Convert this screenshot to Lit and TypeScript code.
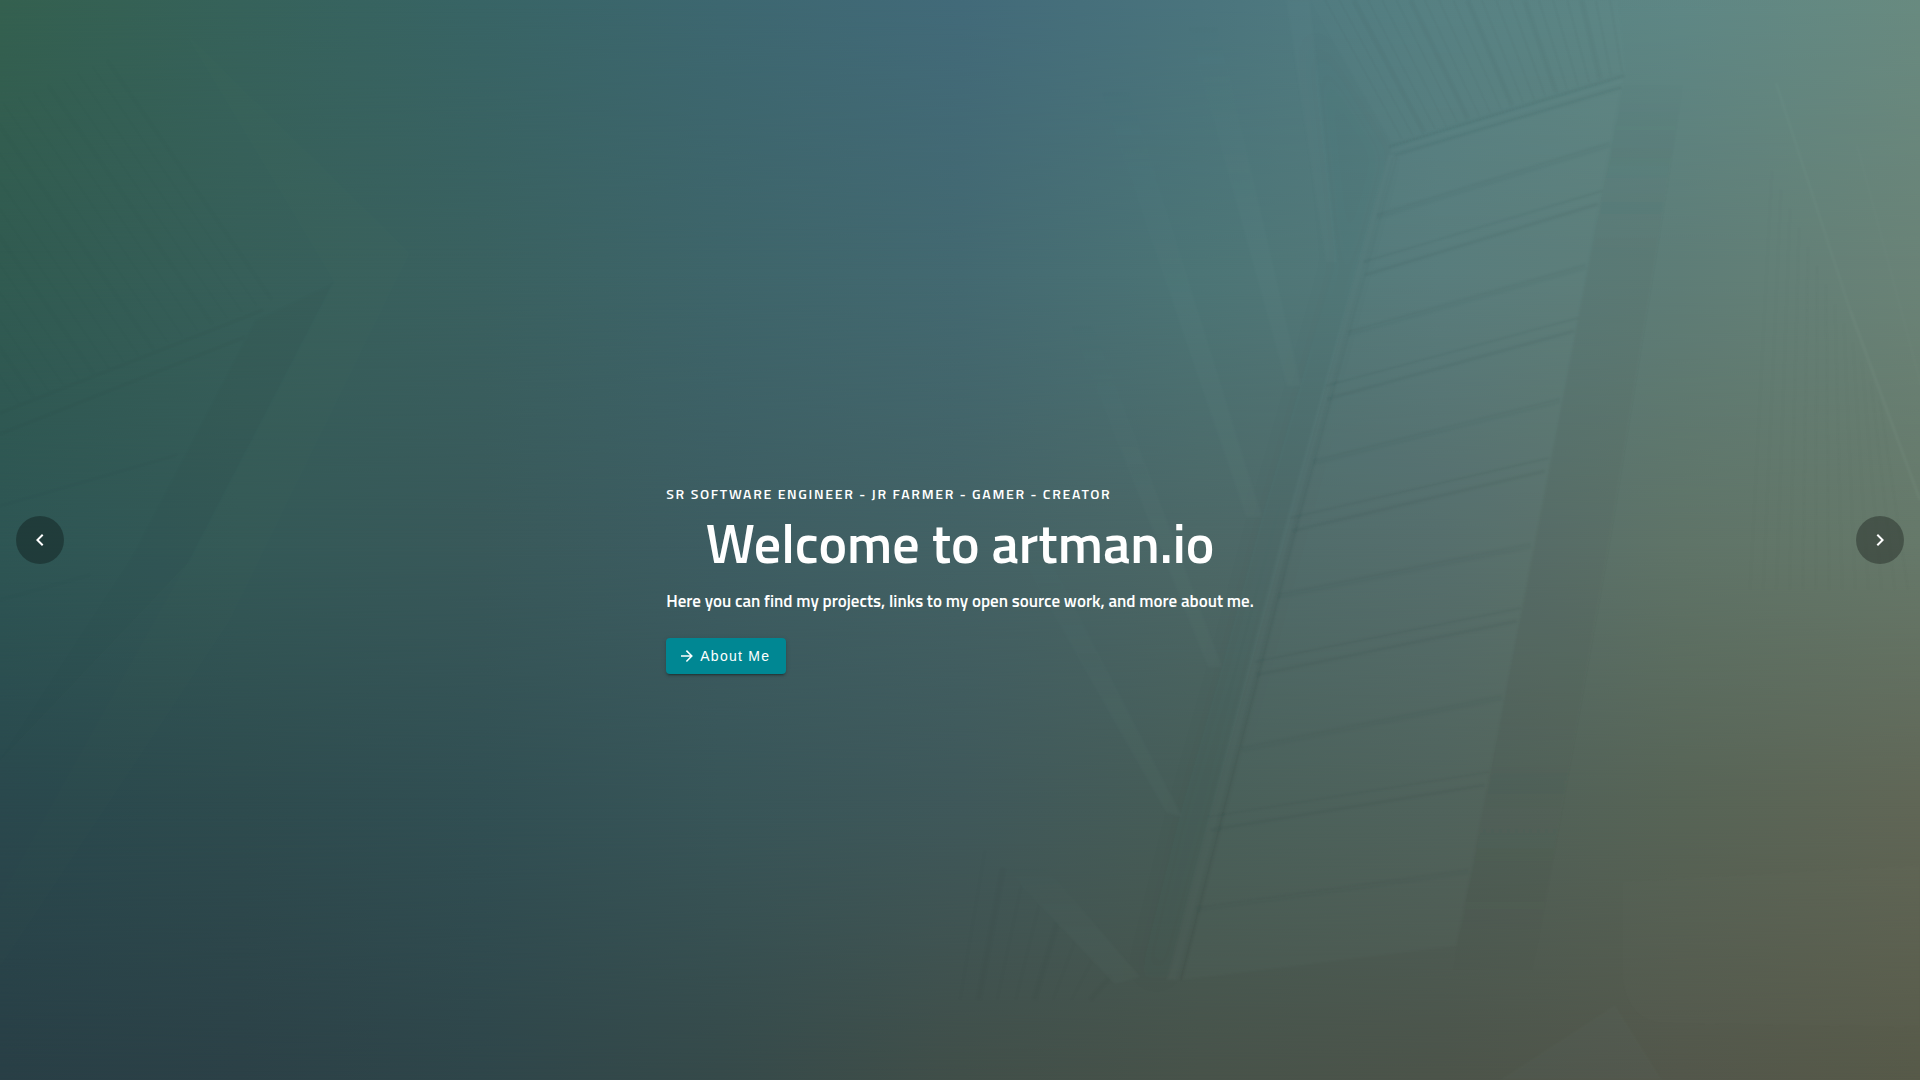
import { LitElement, html, svg, css } from "lit";
import { customElement, state } from "lit/decorators.js";

type Line = [number, number, number, number];

/* Colour mesh: one row of stops for each quarter of the height. */
const MESH: string[][] = [
  ["#34604f", "#36625a", "#386465", "#3d6770", "#426a79", "#4a747d", "#568082", "#5e8785", "#688a80"],
  ["#315b51", "#375f59", "#3a6160", "#3e656a", "#436971", "#4c7576", "#577b7b", "#5e7d77", "#6a8377"],
  ["#2e5654", "#345957", "#39595a", "#3d5d62", "#436265", "#4c6867", "#546c6a", "#5f7468", "#66796a"],
  ["#29484d", "#2e4b4e", "#314f53", "#385558", "#3f585a", "#475d57", "#4e6059", "#576456", "#606656"],
  ["#293f46", "#2c4147", "#2f464a", "#364a4a", "#414f49", "#48534a", "#4c544a", "#53574b", "#575a49"],
];

/* Soft mullions of the glass panel. */
const MULLIONS: Line[] = [
  [1377, 217, 1610, 145],
  [1348, 334, 1586, 267],
  [1313, 463, 1560, 401],
  [1277, 597, 1531, 546],
  [1242, 750, 1502, 698],
  [1196, 910, 1469, 872],
];

/* Floor edges, each drawn as a sharp line with a softer one below. */
const FLOORS: Line[] = [
  [1367, 262, 1602, 191],
  [1329, 386, 1578, 318],
  [1294, 518, 1549, 458],
  [1258, 662, 1521, 608],
  [1212, 817, 1489, 772],
];

const lerp = (a: number, b: number, t: number) => a + (b - a) * t;

@customElement("hero-backdrop")
class HeroBackdrop extends LitElement {
  static styles = css`
    :host {
      display: block;
      overflow: hidden;
    }
    .scene {
      display: block;
      width: 100%;
      height: 100%;
    }
    .detail {
      opacity: 0.6;
    }
  `;

  private mesh() {
    const last = MESH.length - 1;
    return MESH.map((row, i) => ({ row, i }))
      .reverse()
      .map(
        ({ row, i }) => svg`
          <linearGradient id="row${i}">
            ${row.map((c, n) => svg`<stop offset="${n / (row.length - 1)}" stop-color="${c}"></stop>`)}
          </linearGradient>
          <linearGradient id="fade${i}" x1="0" y1="0" x2="0" y2="1">
            <stop offset="${i / last}" stop-color="#fff"></stop>
            <stop offset="${Math.min(1, (i + 1) / last)}" stop-color="#fff" stop-opacity="${i === last ? 1 : 0}"></stop>
          </linearGradient>
          <mask id="mask${i}">
            <rect width="1920" height="1080" fill="url(#fade${i})"></rect>
          </mask>
          <rect width="1920" height="1080" fill="url(#row${i})" mask="url(#mask${i})"></rect>`
      );
  }

  private line([x1, y1, x2, y2]: Line, width: number, opacity: number, color = "#1c3434") {
    return svg`<line x1="${x1}" y1="${y1}" x2="${x2}" y2="${y2}" stroke="${color}"
      stroke-width="${width}" stroke-opacity="${opacity}"></line>`;
  }

  private roof() {
    return Array.from({ length: 21 }, (_, i) => {
      const t = i / 20;
      const seam = i % 4 === 2;
      const l: Line = [lerp(1325, 1610, t), 0, lerp(1402, 1622, t), lerp(139, 72, t)];
      return this.line(l, seam ? 6 : 2, seam ? 0.09 : 0.1);
    });
  }

  private leftRoof() {
    return Array.from({ length: 18 }, (_, i) => {
      const t = i / 17;
      const x = lerp(20, 272, t);
      const y = lerp(405, 300, t);
      return this.line([x - 165, y - 240, x, y], i % 4 === 1 ? 4 : 2, 0.02);
    });
  }

  private rightFins() {
    return Array.from({ length: 13 }, (_, i) => {
      const t = i / 12;
      return this.line([lerp(1772, 1880, t), lerp(170, 400, t), lerp(1750, 1908, t), 590], 2, 0.03);
    });
  }

  private lowFins() {
    return Array.from({ length: 8 }, (_, i) => {
      const t = i / 7;
      return this.line([lerp(985, 1112, t), lerp(850, 975, t), lerp(960, 1090, t), 1000], i % 3 === 1 ? 6 : 2, 0.03);
    });
  }

  render() {
    return html`
      <svg class="scene" viewBox="0 0 1920 1080" preserveAspectRatio="none" aria-hidden="true">
        <defs>
          <filter id="soft" x="-20%" y="-20%" width="140%" height="140%">
            <feGaussianBlur stdDeviation="1"></feGaussianBlur>
          </filter>
          <filter id="haze" x="-20%" y="-20%" width="140%" height="140%">
            <feGaussianBlur stdDeviation="12"></feGaussianBlur>
          </filter>
          <linearGradient id="shade" x1="0" y1="0" x2="0" y2="1">
            <stop offset="0" stop-color="#3c4a44" stop-opacity="0"></stop>
            <stop offset="0.2" stop-color="#3c4a44" stop-opacity="0.08"></stop>
            <stop offset="0.7" stop-color="#3c4a44" stop-opacity="0.08"></stop>
            <stop offset="1" stop-color="#3c4a44" stop-opacity="0"></stop>
          </linearGradient>
          <linearGradient id="beam" x1="0" y1="0" x2="0" y2="1">
            <stop offset="0" stop-color="#a0c8c0" stop-opacity="0"></stop>
            <stop offset="0.6" stop-color="#a0c8c0" stop-opacity="0.05"></stop>
            <stop offset="1" stop-color="#a0c8c0" stop-opacity="0.05"></stop>
          </linearGradient>
        </defs>
        ${this.mesh()}
        <g class="detail">
          <g filter="url(#haze)">
            <path d="M1310 30 1335 262 1300 386 1262 517 1222 667 1180 815 1140 977 1167 980 1388 155z" fill="#2c4a40" fill-opacity="0.06"></path>
          </g>
          <g filter="url(#soft)">
            <path d="M1626 71 1686 71 1610 540 1530 990 1448 990z" fill="url(#shade)"></path>
            <path d="M1396 155 1621 90 1535 540 1456 946 1183 980 1295 540z" fill="#a0c8c0" fill-opacity="0.05"></path>
            <path d="M1310 0H1618L1626 71 1391 143z" fill="#a0c8c0" fill-opacity="0.04"></path>
            ${this.roof()}
            ${this.line([1389, 147, 1624, 76], 2, 0.1)}
            ${this.line([1391, 151, 1623, 81], 3, 0.08, "#9cc4bc")}
            ${this.line([1394, 156, 1621, 88], 2, 0.12)}
            <path d="M1388 155 1396 155 1290 540 1178 980 1167 980 1281 540z" fill="#a0c8c0" fill-opacity="0.07"></path>
            ${this.line([1393, 157, 1289, 540], 1, 0.16)}
            ${this.line([1289, 540, 1176, 980], 1, 0.16)}
            ${this.line([1397, 157, 1294, 540], 1, 0.12)}
            ${this.line([1294, 540, 1181, 980], 1, 0.12)}
            ${MULLIONS.map((l) => [
              this.line(l, 5, 0.08),
              this.line([l[0], l[1] - 3, l[2], l[3] - 3], 1, 0.1),
            ])}
            ${FLOORS.map(([a, b, c, d]) => [
              this.line([a - 4, b, c, d], 2, 0.15),
              this.line([a - 2, b + 13, c - 4, d + 13], 4, 0.1),
            ])}
            <path d="M1286 0H1310L1337 262H1326z" fill="#a0c8c0" fill-opacity="0.05"></path>
            <path d="M1180 0H1212L1301 386H1287z" fill="url(#beam)"></path>
            <path d="M1090 60H1120L1262 517H1246z" fill="url(#beam)"></path>
            <path d="M1060 300H1084L1222 667H1208z" fill="url(#beam)"></path>
            <path d="M1000 520H1030L1182 817 1166 812z" fill="url(#beam)"></path>
            <path d="M997 860 1040 860 1140 977 1115 984z" fill="url(#beam)"></path>
            ${this.lowFins()}
            ${this.rightFins()}
            ${this.line([1776, 83, 1850, 310], 3, 0.08, "#a8c8b8")}
            ${this.line([1850, 310, 1920, 500], 3, 0.12, "#a8c8b8")}
            ${this.line([1857, 145, 1925, 400], 2, 0.06, "#a8c8b8")}
            <path d="M1920 865 1622 882V970Q1625 1022 1665 1023L1920 1027z" fill="#a0a090" fill-opacity="0.03"></path>
            <path d="M1615 1005 1662 1080H1500z" fill="#a0c8c0" fill-opacity="0.04"></path>
            ${this.leftRoof()}
            <path d="M184 31 410 253 230 620 0 967V760L190 560 334 282z" fill="#a0c8a0" fill-opacity="0.02"></path>
            <path d="M334 282 255 320 130 560 0 760V900L190 560z" fill="#1c3434" fill-opacity="0.02"></path>
            ${this.line([0, 413, 263, 310], 2, 0.05)}
            ${this.line([0, 434, 245, 337], 2, 0.05)}
            ${this.line([0, 506, 177, 455], 2, 0.04)}
            ${this.line([0, 600, 90, 575], 2, 0.04)}
          </g>
        </g>
      </svg>
    `;
  }
}

@customElement("app-root")
class AppRoot extends LitElement {
  static styles = css`
    :host {
      display: block;
      color: #fff;
      font-family: "Titillium Web", Roboto, "Liberation Sans", sans-serif;
    }
    .hero {
      display: grid;
      grid-template-columns: auto 1fr auto;
      align-items: center;
      min-height: 100vh;
      box-sizing: border-box;
      padding: 0 16px;
      position: relative;
      isolation: isolate;
    }
    .backdrop {
      position: absolute;
      inset: 0;
      z-index: -1;
    }
    .arrow {
      display: grid;
      place-items: center;
      width: 48px;
      height: 48px;
      padding: 0;
      border: 0;
      border-radius: 50%;
      background: rgba(0, 0, 0, 0.3);
      color: inherit;
      cursor: pointer;
    }
    .icon {
      display: block;
      width: 24px;
      height: 24px;
      fill: currentColor;
    }
    .content {
      display: flex;
      flex-direction: column;
      align-items: flex-start;
      justify-self: center;
      padding-top: 78px;
    }
    .eyebrow {
      margin: 0 0 3px;
      font-size: 14px;
      line-height: 20px;
      font-weight: 600;
      letter-spacing: 0.12em;
      text-transform: uppercase;
    }
    .title {
      margin: 0 0 10px;
      align-self: center;
      font-size: 54px;
      line-height: 72px;
      font-weight: 600;
    }
    .lead {
      margin: 0 0 25px;
      font-size: 17px;
      line-height: 24px;
      font-weight: 600;
    }
    .about {
      display: inline-flex;
      align-items: center;
      gap: 4px;
      height: 36px;
      padding: 0 16px 0 12px;
      border-radius: 4px;
      background: #008793;
      color: inherit;
      font: 400 14px/20px "Liberation Sans", sans-serif;
      letter-spacing: 0.09em;
      text-decoration: none;
      box-shadow: 0 3px 1px -2px rgba(0, 0, 0, 0.2), 0 2px 2px rgba(0, 0, 0, 0.14),
        0 1px 5px rgba(0, 0, 0, 0.12);
    }
    .about .icon {
      width: 18px;
      height: 18px;
    }
  `;

  @state() private slide = 0;

  render() {
    return html`
      <main class="hero">
        <hero-backdrop class="backdrop"></hero-backdrop>
        <button class="arrow" type="button" aria-label="Previous visual" @click=${() => this.slide--}>
          <svg class="icon" viewBox="0 0 24 24" aria-hidden="true">
            <path d="M15.41 16.58 10.83 12 15.41 7.41 14 6 8 12 14 18z"></path>
          </svg>
        </button>
        <section class="content">
          <p class="eyebrow">Sr Software Engineer - Jr Farmer - Gamer - Creator</p>
          <h1 class="title">Welcome to artman.io</h1>
          <p class="lead">Here you can find my projects, links to my open source work, and more about me.</p>
          <a class="about" href="#about">
            <svg class="icon" viewBox="0 0 24 24" aria-hidden="true">
              <path d="M4 11V13H16L10.5 18.5 11.92 19.92 19.84 12 11.92 4.08 10.5 5.5 16 11z"></path>
            </svg>
            About Me
          </a>
        </section>
        <button class="arrow" type="button" aria-label="Next visual" @click=${() => this.slide++}>
          <svg class="icon" viewBox="0 0 24 24" aria-hidden="true">
            <path d="M8.59 16.58 13.17 12 8.59 7.41 10 6 16 12 10 18z"></path>
          </svg>
        </button>
      </main>
    `;
  }
}
